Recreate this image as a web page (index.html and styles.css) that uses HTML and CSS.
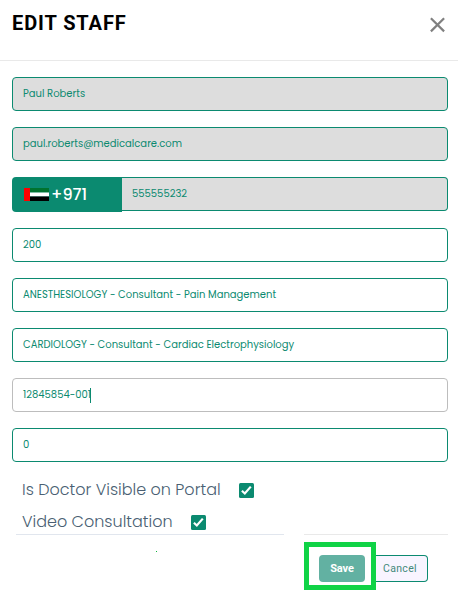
FILE: index.html
```
<!DOCTYPE html>
<html lang="en">
<head>
<meta charset="utf-8">
<title>Edit Staff</title>
<link rel="stylesheet" href="styles.css">
</head>
<body>
<main class="modal">
  <header class="modal-header">
    <h1 class="title">EDIT STAFF</h1>
    <svg class="close" width="16" height="16" viewBox="0 0 16 16"><path d="M.9 1.2 14.1 14.4M14.1 1.2 .9 14.4" stroke="#808080" stroke-width="2.2" fill="none"/></svg>
  </header>
  <form class="fields">
    <div class="field disabled"><span>Paul Roberts</span></div>
    <div class="field disabled"><span>paul.roberts@medicalcare.com</span></div>
    <div class="phone">
      <div class="code">
        <svg width="25" height="13" viewBox="0 0 25 13"><path fill="#00732f" d="M0 0h25v4.5H0z"/><path fill="#fff" d="M0 4.5h25v4H0z"/><path fill="#000" d="M0 8.5h25V13H0z"/><path fill="#f00" d="M0 0h6v13H0z"/></svg>
        <span class="dial">+971</span>
      </div>
      <div class="field disabled number"><span>555555232</span></div>
    </div>
    <div class="field"><span>200</span></div>
    <div class="field"><span>ANESTHESIOLOGY - Consultant - Pain Management</span></div>
    <div class="field"><span>CARDIOLOGY - Consultant - Cardiac Electrophysiology</span></div>
    <div class="field focused"><span>12845854-001</span><i class="caret"></i></div>
    <div class="field"><span>0</span></div>
  </form>
  <section class="checks">
    <div class="check"><span>Is Doctor Visible on Portal</span>
      <svg class="box" width="15" height="15" viewBox="0 0 15 15"><rect width="15" height="15" rx="1.5" fill="#0b8a70"/><path d="M2.9 7.8 5.8 10.5 11.8 3.6" stroke="#fff" stroke-width="2.2" fill="none"/></svg></div>
    <div class="check"><span>Video Consultation</span>
      <svg class="box" width="15" height="15" viewBox="0 0 15 15"><rect width="15" height="15" rx="1.5" fill="#0b8a70"/><path d="M2.9 7.8 5.8 10.5 11.8 3.6" stroke="#fff" stroke-width="2.2" fill="none"/></svg></div>
  </section>
  <div class="rules"><i class="rule-left"></i><i class="rule-right"></i></div>
  <footer class="actions">
    <i class="speck"></i>
    <div class="highlight"><button class="save">Save</button></div>
    <button class="cancel">Cancel</button>
  </footer>
</main>
</body>
</html>
```
FILE: styles.css
```
* { box-sizing: border-box; }
body { margin: 0; background: #fff; font-family: Poppins, Inter, sans-serif; color: #0b8a70; }
.modal { width: 458px; height: 590px; overflow: hidden; }
.modal-header { height: 61px; border-bottom: 1px solid #e9e9e9; display: flex; justify-content: space-between; padding: 11px 12px 0 12px; }
.title { margin: 0; font: 700 20px/24px Roboto, sans-serif; letter-spacing: .9px; color: #000; white-space: nowrap; }
.close { margin-top: 6px; }
.fields { display: flex; flex-direction: column; gap: 16px; padding: 16px 10px 0 12px; }
.field { height: 34px; border: 1px solid #0b8a70; border-radius: 4px; padding: 0 10px; display: flex; align-items: center; font-size: 10px; line-height: 16px; white-space: nowrap; }
.disabled { background: #ddd; }
.focused { border-color: #bdbdbd; }
.phone { display: flex; height: 35px; }
.code { width: 110px; background: #0b8a70; border-radius: 4px 0 0 4px; display: flex; align-items: center; padding-left: 12px; gap: 2px; color: #fff; }
.dial { font-size: 16px; font-weight: 500; }
.number { flex: 1; border-left: 0; border-radius: 0 4px 4px 0; }
.caret { width: 1px; height: 15px; margin-left: -1px; background: #0b8a70; }
.checks { padding: 15px 0 1px 22px; }
.check { display: flex; align-items: center; height: 24px; font-size: 16px; font-weight: 300; color: #4a5f73; white-space: nowrap; }
.check + .check { margin-top: 8px; }
.box { margin: 2px 0 0 18px; }
.rules { display: flex; gap: 20px; padding: 0 10px 0 16px; }
.rule-left { width: 268px; height: 1px; background: #e1e6ee; }
.rule-right { flex: 1; height: 1px; background: #e9e9e9; }
.actions { display: flex; padding-top: 7px; }
.speck { width: 1px; height: 1px; margin: 9px 147px 0 156px; background: #10b53c; }
.highlight { width: 72px; height: 48px; border: 5px solid #10d346; display: flex; padding: 8px 0 0 10px; }
.save { width: 46px; height: 27px; border: 0; border-radius: 4px; padding: 0; background: #62b1a2; color: #fff; font: 700 11px Roboto, sans-serif; letter-spacing: -.1px; }
.cancel { width: 52px; height: 27px; margin-top: 13px; border: 1px solid #0b8a70; border-left: 0; border-radius: 0 4px 4px 0; padding: 0 3px 0 0; background: #f8f4ff; color: #43897b; font: 400 10.5px Roboto, sans-serif; letter-spacing: .3px; }
```
